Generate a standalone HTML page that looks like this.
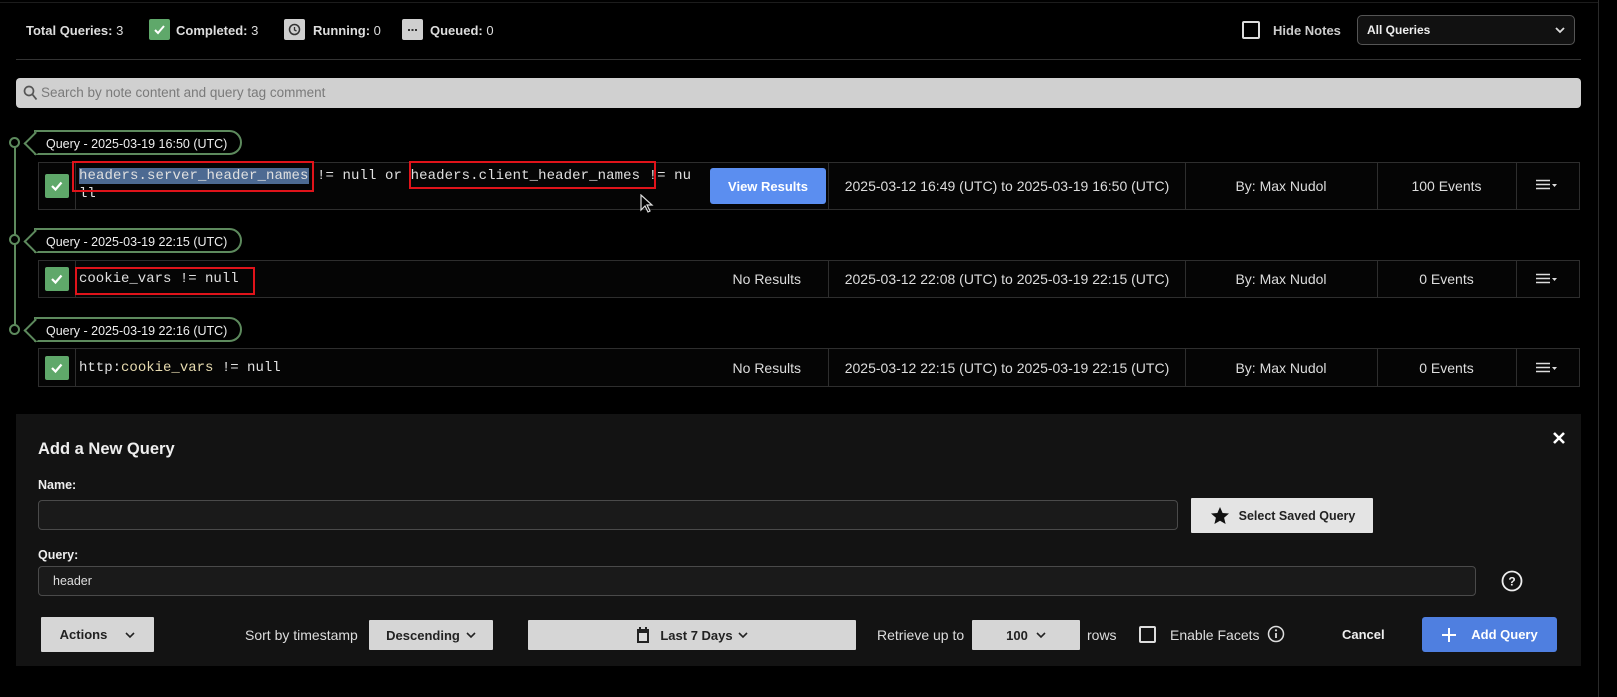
<!DOCTYPE html>
<html><head><meta charset="utf-8"><style>
*{box-sizing:border-box;margin:0;padding:0}
body{width:1617px;height:697px;background:#000;position:relative;overflow:hidden;font-family:"Liberation Sans",sans-serif;color:#ddd;font-size:13px}
.a{position:absolute}
.t{position:absolute;white-space:nowrap;line-height:1}
.b{font-weight:bold}
.mono{font-family:"Liberation Mono",monospace;font-size:14px;color:#e0e0e0}
.row{position:absolute;left:38px;width:1542px;border:1px solid #2e2e2e;background:#050505}
.row .t{font-size:14px}
.vd{position:absolute;top:0;bottom:0;width:1px;background:#2e2e2e}
.chk{position:absolute;width:24px;height:24px;background:#5fa86a;border-radius:2px}
.pill{position:absolute;left:34px;width:208px;height:25px;border:2px solid #5d8a5d;border-radius:0 13px 13px 0;background:#000}
.pill:before{content:"";position:absolute;left:-9px;top:3px;width:15px;height:15px;border-left:2px solid #5d8a5d;border-bottom:2px solid #5d8a5d;transform:rotate(45deg);background:#000}
.pill span{position:absolute;left:10px;top:5px;font-size:12.5px;color:#eee;white-space:nowrap}
.dot{position:absolute;left:9px;width:11px;height:11px;border:2px solid #5d8a5d;border-radius:50%;background:#000}
.red{position:absolute;border:2px solid #e0131a}
.btn{position:absolute;background:#d6d6d6;color:#222;font-weight:bold;font-size:13px;display:flex;align-items:center;justify-content:center;border-radius:1px}
</style></head><body>
<div class="a" style="left:0;top:2px;width:1598px;height:1px;background:#1c1c1c"></div>
<div class="a" style="left:1598px;top:0;width:1px;height:697px;background:#2a2a2a"></div>

<div class="t b" style="left:26px;top:24px;font-size:13px">Total Queries: <span style="font-weight:normal">3</span></div>
<div class="a" style="left:149px;top:19px;width:21px;height:21px;background:#5fa86a;border-radius:2px"><svg width="21" height="21"><path d="M6 11l3 3 6-7" stroke="#fff" stroke-width="2" fill="none"/></svg></div>
<div class="t b" style="left:176px;top:24px;font-size:13px">Completed: <span style="font-weight:normal">3</span></div>
<div class="a" style="left:284px;top:19px;width:21px;height:21px;background:#cfcfcf;border-radius:2px"><svg width="21" height="21"><circle cx="10.5" cy="10.5" r="5" stroke="#333" stroke-width="1.5" fill="none"/><path d="M10.5 8v3l2 1" stroke="#333" stroke-width="1.3" fill="none"/></svg></div>
<div class="t b" style="left:313px;top:24px;font-size:13px">Running: <span style="font-weight:normal">0</span></div>
<div class="a" style="left:402px;top:19px;width:21px;height:21px;background:#cfcfcf;border-radius:2px"><svg width="21" height="21"><path d="M6 11h9" stroke="#333" stroke-width="2" stroke-dasharray="2 1.5"/></svg></div>
<div class="t b" style="left:430px;top:24px;font-size:13px">Queued: <span style="font-weight:normal">0</span></div>

<div class="a" style="left:1242px;top:21px;width:18px;height:18px;border:2px solid #ddd;border-radius:2px"></div>
<div class="t b" style="left:1273px;top:24px;font-size:13px;color:#ccc">Hide Notes</div>
<div class="a" style="left:1357px;top:15px;width:218px;height:30px;border:1px solid #555;border-radius:5px;background:#111"></div>
<div class="t b" style="left:1367px;top:24px;font-size:12px;color:#eee">All Queries</div>
<svg class="a" style="left:1555px;top:26px" width="10" height="8"><path d="M1 2l4 4 4-4" stroke="#ddd" stroke-width="1.8" fill="none"/></svg>

<div class="a" style="left:16px;top:59px;width:1565px;height:1px;background:#333"></div>
<div class="a" style="left:16px;top:78px;width:1565px;height:30px;background:#d0d0d0;border-radius:4px"></div>
<svg class="a" style="left:23px;top:85px" width="15" height="16"><circle cx="6" cy="6" r="4.5" stroke="#555" stroke-width="1.7" fill="none"/><path d="M9.5 9.5l4 5" stroke="#555" stroke-width="1.8"/></svg>
<div class="t" style="left:41px;top:86px;font-size:13.5px;color:#7a7a7a">Search by note content and query tag comment</div>

<div class="a" style="left:14px;top:142px;width:2px;height:188px;background:#5d8a5d"></div>
<div class="dot" style="top:137px"></div><div class="dot" style="top:234px"></div><div class="dot" style="top:324px"></div>

<div class="pill" style="top:130px"><span>Query - 2025-03-19 16:50 (UTC)</span></div>
<div class="pill" style="top:228px"><span>Query - 2025-03-19 22:15 (UTC)</span></div>
<div class="pill" style="top:317px"><span>Query - 2025-03-19 22:16 (UTC)</span></div>

<!-- row 1 -->
<div class="row" style="top:162px;height:48px">
 <div class="vd" style="left:36px"></div><div class="vd" style="left:789px"></div><div class="vd" style="left:1146px"></div><div class="vd" style="left:1338px"></div><div class="vd" style="left:1477px"></div>
 <div class="chk" style="left:6px;top:11px"><svg width="24" height="24"><path d="M7 12l3.5 3.5 6-7" stroke="#fff" stroke-width="2.2" fill="none"/></svg></div>
 <div class="a" style="left:671px;top:5px;width:116px;height:36px;background:#5b8ef0;border-radius:3px;color:#fff;font-weight:bold;font-size:13px;display:flex;align-items:center;justify-content:center">View Results</div>
 <div class="t" style="left:790px;width:356px;top:16px;text-align:center">2025-03-12 16:49 (UTC) to 2025-03-19 16:50 (UTC)</div>
 <div class="t" style="left:1146px;width:192px;top:16px;text-align:center">By: Max Nudol</div>
 <div class="t" style="left:1338px;width:139px;top:16px;text-align:center">100 Events</div>
</div>
<div class="t mono" style="left:79px;top:169px;letter-spacing:0.1px"><span style="background:#4d6a92">headers.server_header_names</span> != null or headers.client_header_names != nu</div>
<div class="t mono" style="left:79px;top:187px">ll</div>
<div class="red" style="left:72px;top:161px;width:242px;height:31px"></div>
<div class="red" style="left:409px;top:161px;width:247px;height:28px"></div>
<svg class="a" style="left:640px;top:194px" width="14" height="20"><path d="M1 1v15l4-4 3 6 2-1-3-6h5z" fill="#000" stroke="#ddd" stroke-width="1.2"/></svg>

<!-- row 2 -->
<div class="row" style="top:260px;height:38px">
 <div class="vd" style="left:36px"></div><div class="vd" style="left:789px"></div><div class="vd" style="left:1146px"></div><div class="vd" style="left:1338px"></div><div class="vd" style="left:1477px"></div>
 <div class="chk" style="left:6px;top:6px"><svg width="24" height="24"><path d="M7 12l3.5 3.5 6-7" stroke="#fff" stroke-width="2.2" fill="none"/></svg></div>
 <div class="t" style="right:778px;top:11px">No Results</div>
 <div class="t" style="left:790px;width:356px;top:11px;text-align:center">2025-03-12 22:08 (UTC) to 2025-03-19 22:15 (UTC)</div>
 <div class="t" style="left:1146px;width:192px;top:11px;text-align:center">By: Max Nudol</div>
 <div class="t" style="left:1338px;width:139px;top:11px;text-align:center">0 Events</div>
</div>
<div class="t mono" style="left:79px;top:272px">cookie_vars != null</div>
<div class="red" style="left:75px;top:267px;width:180px;height:28px"></div>

<!-- row 3 -->
<div class="row" style="top:348px;height:39px">
 <div class="vd" style="left:36px"></div><div class="vd" style="left:789px"></div><div class="vd" style="left:1146px"></div><div class="vd" style="left:1338px"></div><div class="vd" style="left:1477px"></div>
 <div class="chk" style="left:6px;top:7px"><svg width="24" height="24"><path d="M7 12l3.5 3.5 6-7" stroke="#fff" stroke-width="2.2" fill="none"/></svg></div>
 <div class="t" style="right:778px;top:12px">No Results</div>
 <div class="t" style="left:790px;width:356px;top:12px;text-align:center">2025-03-12 22:15 (UTC) to 2025-03-19 22:15 (UTC)</div>
 <div class="t" style="left:1146px;width:192px;top:12px;text-align:center">By: Max Nudol</div>
 <div class="t" style="left:1338px;width:139px;top:12px;text-align:center">0 Events</div>
</div>
<div class="t mono" style="left:79px;top:361px">http:<span style="color:#e8dcb0">cookie_vars</span> != null</div>

<!-- menu icons -->
<svg class="a" style="left:1536px;top:179px" width="24" height="12"><path d="M0 1.5h14M0 5.5h14M0 9.5h14" stroke="#ddd" stroke-width="1.6"/><path d="M16 5h5l-2.5 3z" fill="#ddd"/></svg>
<svg class="a" style="left:1536px;top:273px" width="24" height="12"><path d="M0 1.5h14M0 5.5h14M0 9.5h14" stroke="#ddd" stroke-width="1.6"/><path d="M16 5h5l-2.5 3z" fill="#ddd"/></svg>
<svg class="a" style="left:1536px;top:362px" width="24" height="12"><path d="M0 1.5h14M0 5.5h14M0 9.5h14" stroke="#ddd" stroke-width="1.6"/><path d="M16 5h5l-2.5 3z" fill="#ddd"/></svg>

<!-- bottom panel -->
<div class="a" style="left:16px;top:414px;width:1565px;height:252px;background:#131313"></div>
<div class="t b" style="left:38px;top:441px;font-size:16.5px;color:#eee">Add a New Query</div>
<svg class="a" style="left:1552px;top:431px" width="14" height="14"><path d="M2 2l10 10M12 2L2 12" stroke="#fff" stroke-width="2.6"/></svg>
<div class="t b" style="left:38px;top:479px;font-size:12.5px;color:#eee">Name:</div>
<div class="a" style="left:38px;top:500px;width:1140px;height:30px;background:#1a1a1a;border:1px solid #4a4a4a;border-radius:4px"></div>
<div class="btn" style="left:1191px;top:498px;width:182px;height:35px;background:#e4e4e4;font-size:12.5px"><svg width="22" height="20" style="margin-right:8px"><path d="M11 1l2.6 6 6.4.5-4.9 4.2 1.5 6.3L11 14.7 5.4 18l1.5-6.3L2 7.5 8.4 7z" fill="#111"/></svg>Select Saved Query</div>
<div class="t b" style="left:38px;top:549px;font-size:12.5px;color:#eee">Query:</div>
<div class="a" style="left:38px;top:566px;width:1438px;height:30px;background:#1a1a1a;border:1px solid #4a4a4a;border-radius:4px"></div>
<div class="t" style="left:53px;top:575px;font-size:12.5px;color:#ddd">header</div>
<svg class="a" style="left:1501px;top:570px" width="22" height="22"><circle cx="11" cy="11" r="9.5" stroke="#eee" stroke-width="1.8" fill="none"/><text x="11" y="15.5" text-anchor="middle" font-size="12" font-weight="bold" fill="#eee" font-family="Liberation Sans">?</text></svg>

<div class="btn" style="left:41px;top:617px;width:113px;height:35px">Actions<svg width="10" height="8" style="margin-left:18px"><path d="M1 2l4 4 4-4" stroke="#222" stroke-width="1.6" fill="none"/></svg></div>
<div class="t" style="left:245px;top:628px;font-size:14px;color:#ddd">Sort by timestamp</div>
<div class="btn" style="left:369px;top:620px;width:124px;height:30px">Descending <svg width="10" height="8" style="margin-left:6px"><path d="M1 2l4 4 4-4" stroke="#222" stroke-width="1.6" fill="none"/></svg></div>
<div class="btn" style="left:528px;top:620px;width:328px;height:30px"><svg width="14" height="18" style="margin-right:10px"><rect x="1" y="3" width="12" height="14" fill="#222"/><rect x="3" y="7" width="8" height="8" fill="#ddd"/><path d="M4 1v4M10 1v4" stroke="#222" stroke-width="2"/></svg>Last 7 Days <svg width="10" height="8" style="margin-left:5px"><path d="M1 2l4 4 4-4" stroke="#222" stroke-width="1.6" fill="none"/></svg></div>
<div class="t" style="left:877px;top:628px;font-size:14px;color:#ddd">Retrieve up to</div>
<div class="btn" style="left:972px;top:620px;width:108px;height:30px">100 <svg width="10" height="8" style="margin-left:8px"><path d="M1 2l4 4 4-4" stroke="#222" stroke-width="1.6" fill="none"/></svg></div>
<div class="t" style="left:1087px;top:628px;font-size:14px;color:#ddd">rows</div>
<div class="a" style="left:1139px;top:626px;width:17px;height:17px;border:2px solid #ddd;border-radius:2px"></div>
<div class="t" style="left:1170px;top:628px;font-size:14px;color:#ddd">Enable Facets</div>
<svg class="a" style="left:1267px;top:625px" width="18" height="18"><circle cx="9" cy="9" r="7.5" stroke="#ddd" stroke-width="1.5" fill="none"/><path d="M9 8v5" stroke="#ddd" stroke-width="1.8"/><circle cx="9" cy="5.3" r="1.1" fill="#ddd"/></svg>
<div class="t b" style="left:1342px;top:628px;font-size:13px;color:#eee">Cancel</div>
<div class="btn" style="left:1422px;top:617px;width:135px;height:35px;background:#4f7fe0;color:#fff;border-radius:3px"><svg width="16" height="16" style="margin-right:14px"><path d="M8 1v14M1 8h14" stroke="#fff" stroke-width="2"/></svg>Add Query</div>
</body></html>
